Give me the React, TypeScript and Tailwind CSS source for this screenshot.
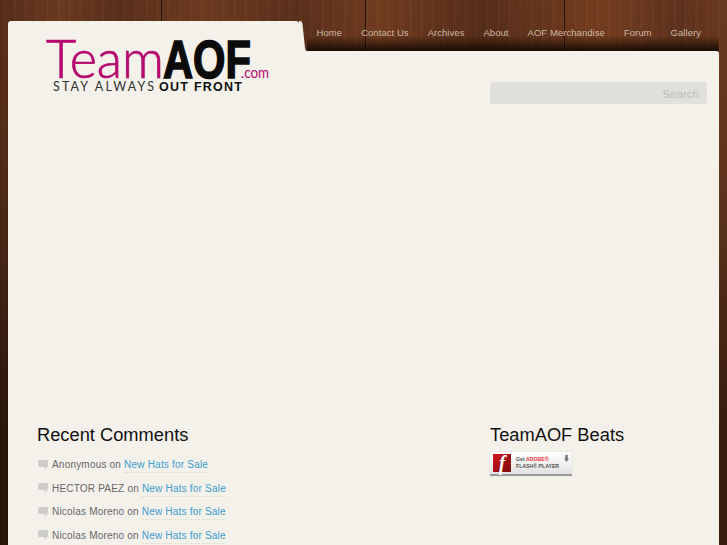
import React from "react";

const navItems = ["Home", "Contact Us", "Archives", "About", "AOF Merchandise", "Forum", "Gallery"];

const comments = [
  { who: "Anonymous", post: "New Hats for Sale" },
  { who: "HECTOR PAEZ", post: "New Hats for Sale" },
  { who: "Nicolas Moreno", post: "New Hats for Sale" },
  { who: "Nicolas Moreno", post: "New Hats for Sale" },
];

function Logo() {
  return (
    <svg width="235" height="62" viewBox="0 0 235 62" className="block overflow-visible">
      <text x="5" y="44" fontFamily="Lato, sans-serif" fontWeight="300" fontSize="53" fill="#b5096f" stroke="#b5096f" strokeWidth="0.7" textLength="118" lengthAdjust="spacingAndGlyphs">Team</text>
      <text x="122" y="44" fontFamily="Liberation Sans, sans-serif" fontWeight="700" fontSize="53" fill="#0b0b0b" stroke="#0b0b0b" strokeWidth="1.6" textLength="88" lengthAdjust="spacingAndGlyphs">AOF</text>
      <text x="200" y="44" fontFamily="Lato, sans-serif" fontSize="15" fill="#b5096f" textLength="28" lengthAdjust="spacingAndGlyphs">.com</text>
      <text x="12" y="57" fontFamily="Lato, sans-serif" fontSize="12.500" fill="#333" textLength="101" lengthAdjust="spacing">STAY ALWAYS</text>
      <text x="118" y="57" fontFamily="Liberation Sans, sans-serif" fontWeight="700" fontSize="12.500" fill="#111" textLength="83" lengthAdjust="spacing">OUT FRONT</text>
    </svg>
  );
}

function CommentIcon() {
  return (
    <svg width="10" height="10" viewBox="0 0 10 10" className="shrink-0">
      <path d="M1.500 0h7A1.500 1.500 0 0 1 10 1.500v4A1.500 1.500 0 0 1 8.500 7v3L6 7H1.500A1.500 1.500 0 0 1 0 5.500v-4A1.500 1.500 0 0 1 1.500 0z" fill="#cfcdc9" />
    </svg>
  );
}

function FlashBadge() {
  return (
    <div className="flex h-[24px] w-[82px] items-center gap-[5px] rounded-[1px] border-b-2 border-[#9a9a9a] bg-gradient-to-b from-white to-[#e2e2e2] pl-[3px] shadow-[0_0_1px_#999]">
      <div className="flex h-[18px] w-[18px] shrink-0 items-center justify-center bg-gradient-to-br from-[#d4141b] to-[#7c0c10] font-['Liberation_Serif',serif] text-[20px] font-bold italic leading-none text-white">
        f
      </div>
      <div className="relative flex-1 text-[5.200px] font-bold leading-[7px] text-[#555]">
        <div>
          Get <span className="text-[#e8323c]">ADOBE®</span>
        </div>
        <div>FLASH® PLAYER</div>
        <svg width="5" height="7" viewBox="0 0 5 7" className="absolute -top-[1px] right-[3px]">
          <path d="M1.200 0h2.600v3.500H5L2.500 7 0 3.500h1.200z" fill="#777" />
        </svg>
      </div>
    </div>
  );
}

export default function App() {
  return (
    <div className="flex h-[545px] flex-col overflow-hidden bg-[#2b170c] px-[8px] pt-[21px] font-['Liberation_Sans',Arial,sans-serif] [background-image:linear-gradient(90deg,transparent_161px,#2a150a_161px,#2a150a_162px,transparent_162px,transparent_365px,#1e0f07_365px,#1e0f07_366px,transparent_366px,transparent_564px,#1e0f07_564px,#1e0f07_565px,transparent_565px),linear-gradient(90deg,rgba(30,12,4,0.25)_0,rgba(120,60,25,0.12)_60px,rgba(30,12,4,0.2)_120px,rgba(130,60,20,0.15)_200px,rgba(30,12,4,0.18)_300px,rgba(140,70,25,0.22)_380px,rgba(30,12,4,0.25)_480px,rgba(150,75,25,0.25)_600px,rgba(40,15,5,0.15)_680px,rgba(120,60,25,0.18)_727px),repeating-linear-gradient(90deg,rgba(0,0,0,0.05)_0,rgba(0,0,0,0.05)_2px,rgba(255,160,90,0.03)_2px,rgba(255,160,90,0.03)_5px,rgba(0,0,0,0.02)_5px,rgba(0,0,0,0.02)_11px),linear-gradient(180deg,#6a3a22_0,#64361f_120px,#54301c_230px,#3d2213_330px,#2b170c_430px,#2b170c_100%)]">
      <div className="flex h-[30px] items-stretch">
        <div className="relative z-10 h-[30px] w-[291px] shrink-0 rounded-t-[3px] bg-[#f4f1eb] pl-[33px] pt-[13px]">
          <Logo />
        </div>
        <svg width="8" height="30" viewBox="0 0 8 30" className="block shrink-0">
          <path d="M0 0h1c1.500 0 2.200 1 2.500 3L6 27c.3 2 1 3 2 3H0z" fill="#f4f1eb" />
        </svg>
        <nav className="flex flex-1 items-center justify-end gap-[19px] whitespace-nowrap bg-gradient-to-b from-transparent via-transparent to-[#1a0c05] pb-[6px] pr-[18px] text-[9.500px] tracking-[0.05px] text-[#c9b6a4]">
          {navItems.map((item) => (
            <span key={item}>{item}</span>
          ))}
        </nav>
      </div>

      <div className="flex-1 rounded-tr-[3px] bg-[#f4f1eb]">
        <div className="flex justify-end pr-[12px] pt-[31px]">
          <div className="flex h-[22px] w-[217px] items-center justify-end rounded-[3px] bg-[#e0dfd9] pr-[8px] pt-[3px] text-[11.500px] text-[#bfbdb8]">
            Search
          </div>
        </div>

        <div className="mt-[319px] flex">
          <section className="w-[482px] shrink-0 pl-[29px]">
            <h2 className="text-[18.300px] leading-[24px] text-[#111]">Recent Comments</h2>
            <ul className="mt-[6px] text-[10px] tracking-[0.2px] text-[#666]">
              {comments.map((c, i) => (
                <li key={i} className="flex h-[23.500px] items-center gap-[4px] pl-px">
                  <CommentIcon />
                  <span>
                    {c.who} on{" "}
                    <a className="border-b border-dotted border-[#dcdad5] pb-[2px] text-[#3a9ccf]">{c.post}</a>
                  </span>
                </li>
              ))}
            </ul>
          </section>
          <section className="flex-1">
            <h2 className="text-[18.300px] leading-[24px] text-[#111]">TeamAOF Beats</h2>
            <div className="mt-[5px]">
              <FlashBadge />
            </div>
          </section>
        </div>
      </div>
    </div>
  );
}
